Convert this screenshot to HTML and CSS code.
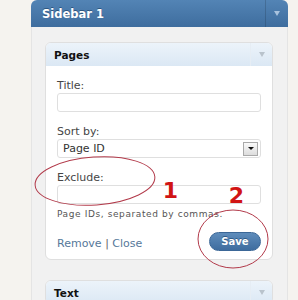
FILE: index.html
```html
<!DOCTYPE html>
<html lang="en">
<head>
  <meta charset="UTF-8">
  <meta name="viewport" content="width=device-width, initial-scale=1.0">
  <title>Sidebar widgets</title>
  <link rel="stylesheet" href="styles.css">
</head>
<body>
  <div class="sidebar">
    <div class="sidebar-head">
      <span class="sidebar-title">Sidebar 1</span>
      <span class="toggle"><i class="arrow"></i></span>
    </div>
    <div class="sidebar-body">
      <div class="widget">
        <div class="widget-head">
          <span class="widget-title">Pages</span>
          <span class="toggle"><i class="arrow"></i></span>
        </div>
        <div class="widget-body">
          <label class="field-label">Title:</label>
          <input class="field" type="text">
          <label class="field-label">Sort by:</label>
          <div class="select">
            <span>Page ID</span>
            <span class="select-btn"><i></i></span>
          </div>
          <label class="field-label">Exclude:</label>
          <input class="field field-last" type="text">
          <div class="hint">Page IDs, separated by commas.</div>
          <div class="widget-foot">
            <span class="links"><a href="#">Remove</a> | <a href="#">Close</a></span>
            <button class="save">Save</button>
          </div>
        </div>
      </div>
      <div class="widget">
        <div class="widget-head">
          <span class="widget-title">Text</span>
          <span class="toggle"><i class="arrow"></i></span>
        </div>
      </div>
    </div>
  </div>

  <svg class="notes" width="298" height="300" viewBox="0 0 298 300">
    <ellipse cx="95" cy="181" rx="60" ry="24" transform="rotate(-4 95 181)"></ellipse>
    <ellipse cx="233" cy="239" rx="35" ry="29"></ellipse>
    <text x="170.5" y="198">1</text>
    <text x="236.5" y="203">2</text>
  </svg>
</body>
</html>
```

FILE: styles.css
```css
body {
  margin: 0;
  padding-left: 31px;
  background: #f5f3ef;
  font-family: 'DejaVu Sans', Verdana, sans-serif;
  height: 300px;
  overflow: hidden;
}
.sidebar {
  width: 257px;
}
.sidebar-head {
  display: flex;
  align-items: stretch;
  height: 27px;
  border-radius: 6px 6px 0 0;
  background: linear-gradient(#5384b5, #3e6d9e);
  color: #fff;
}
.sidebar-title {
  flex: 1;
  display: flex;
  align-items: center;
  padding-left: 11px;
  font-weight: bold;
  font-size: 11.5px;
  text-shadow: 0 -1px 0 #2d5680;
}
.toggle {
  width: 22px;
  display: flex;
  align-items: center;
  justify-content: center;
  border-left: 1px solid rgba(0, 0, 0, 0.15);
}
.arrow {
  width: 0;
  height: 0;
  border-left: 3.5px solid transparent;
  border-right: 3.5px solid transparent;
  border-top: 5px solid #a9c3de;
}
.sidebar-body {
  background: #f1f1f1;
  border-left: 1px solid #e4e4e4;
  border-right: 1px solid #e4e4e4;
  padding: 15px 14px 0 13px;
  height: 300px;
}
.widget {
  border: 1px solid #dfdfdf;
  border-radius: 6px;
  background: #fff;
  margin-bottom: 20px;
}
.widget-head {
  display: flex;
  height: 23px;
  border-radius: 5px 5px 0 0;
  background: linear-gradient(#ecf3fa, #dbe8f4);
}
.widget-title {
  flex: 1;
  display: flex;
  align-items: center;
  padding-left: 8px;
  font-weight: bold;
  font-size: 10.5px;
  color: #111;
}
.widget-head .toggle {
  width: 21px;
  border-left: 1px solid #e6edf4;
}
.widget-head .arrow {
  border-top-color: #b9c3cc;
}
.widget-body {
  padding: 13px 11px 8px;
}
.field-label {
  display: block;
  font-size: 11px;
  line-height: 14px;
  color: #464646;
}
.field {
  display: block;
  box-sizing: border-box;
  width: 100%;
  height: 19px;
  margin: 0 0 13px;
  border: 1px solid #dfdfdf;
  border-radius: 3px;
  background: #fff;
}
.field-last {
  margin-bottom: 4px;
}
.select {
  display: flex;
  align-items: center;
  justify-content: space-between;
  box-sizing: border-box;
  height: 19px;
  margin-bottom: 13px;
  padding: 0 2px 0 5px;
  border: 1px solid #dfdfdf;
  border-radius: 3px;
  font-size: 11px;
  color: #333;
}
.select-btn {
  display: flex;
  align-items: center;
  justify-content: center;
  box-sizing: border-box;
  width: 15px;
  height: 14px;
  border: 1px solid #a9a9a9;
  background: linear-gradient(#fafafa, #dcdcdc);
}
.select-btn i {
  width: 0;
  height: 0;
  border-left: 3px solid transparent;
  border-right: 3px solid transparent;
  border-top: 3px solid #111;
}
.hint {
  font-size: 9px;
  line-height: 12px;
  letter-spacing: 0.6px;
  color: #555;
}
.widget-foot {
  display: flex;
  justify-content: space-between;
  align-items: flex-end;
  margin-top: 12px;
}
.links {
  font-size: 11px;
  line-height: 14px;
  color: #666;
}
.links a {
  color: #56789a;
  text-decoration: none;
}
.save {
  width: 52px;
  height: 19px;
  padding: 0;
  border: 1px solid #3b6797;
  border-radius: 10px;
  background: linear-gradient(#5e8cbb, #3f6d9f);
  color: #fff;
  font-family: 'DejaVu Sans', Verdana, sans-serif;
  font-weight: bold;
  font-size: 10px;
  text-shadow: 0 -1px 0 #2f5a86;
}
.notes {
  position: absolute;
  top: 0;
  left: 0;
  pointer-events: none;
}
.notes ellipse {
  fill: none;
  stroke: #b23a4a;
  stroke-width: 1;
}
.notes text {
  fill: #d11414;
  font-family: 'DejaVu Sans', sans-serif;
  font-weight: bold;
  font-size: 22px;
  text-anchor: middle;
}
```
